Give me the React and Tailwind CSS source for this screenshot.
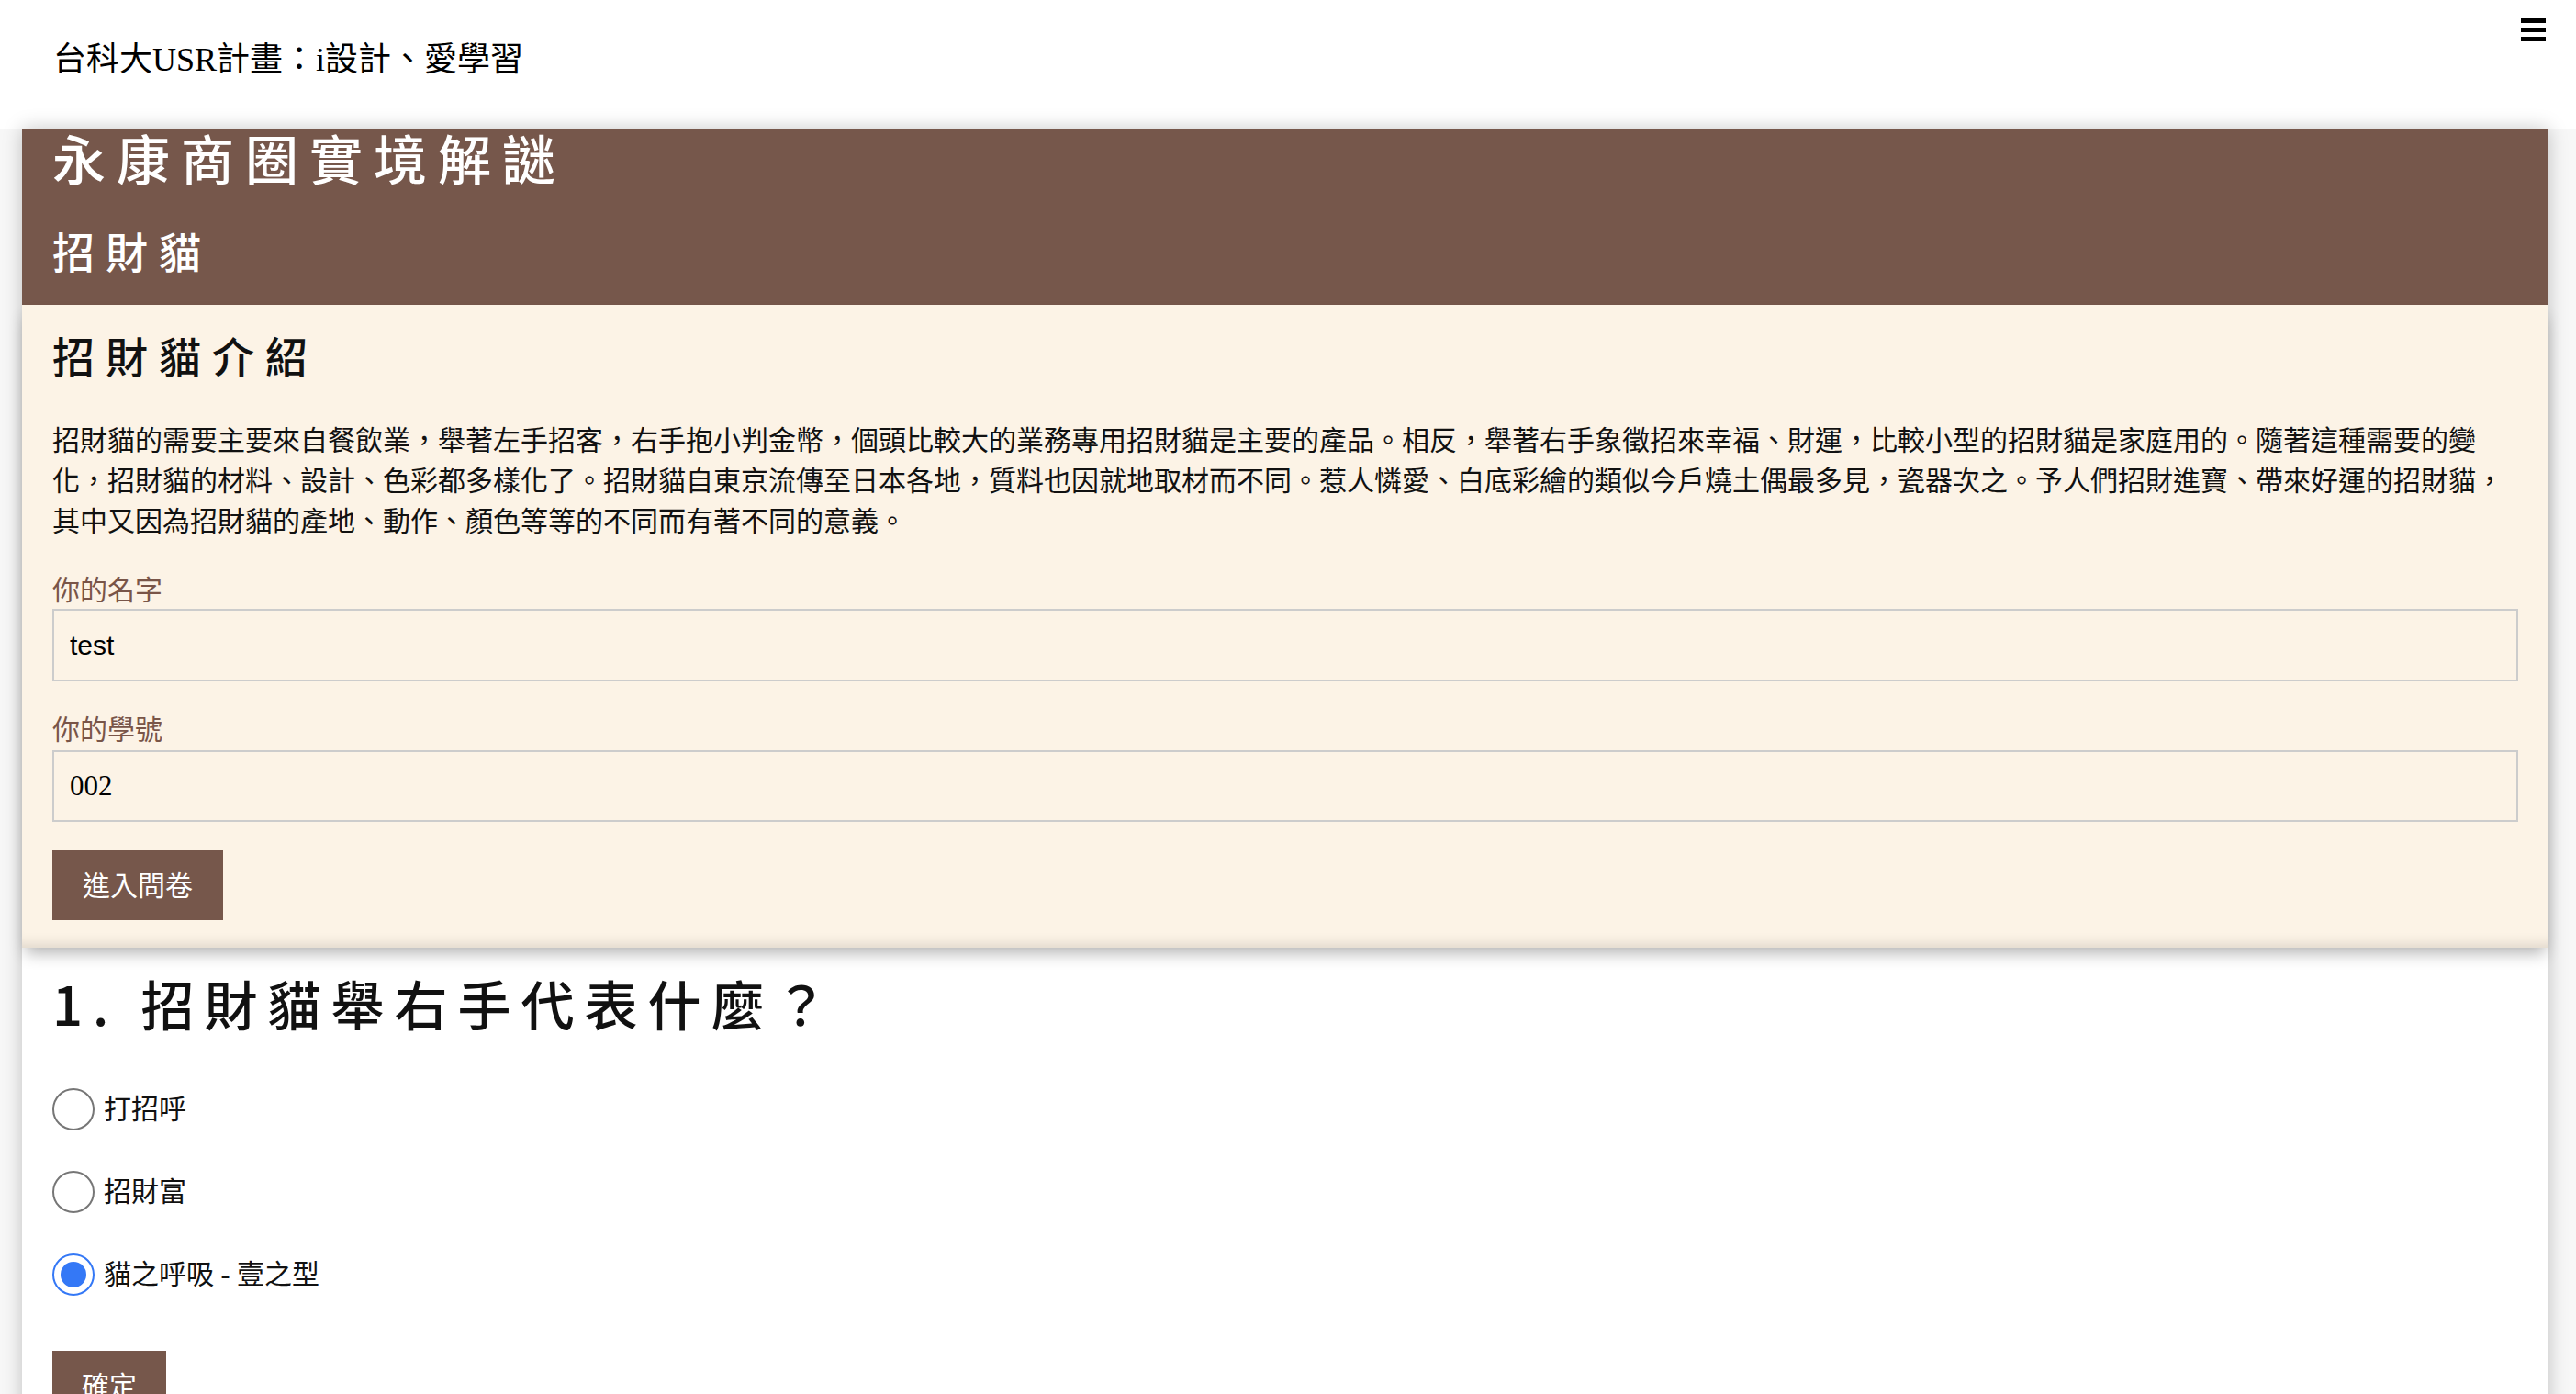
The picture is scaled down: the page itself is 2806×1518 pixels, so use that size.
const serif = "font-['Liberation_Serif','Noto_Sans_CJK_TC',serif]"
const sans = "font-['Noto_Sans_CJK_TC',sans-serif]"

const intro =
  '招財貓的需要主要來自餐飲業，舉著左手招客，右手抱小判金幣，個頭比較大的業務專用招財貓是主要的產品。相反，舉著右手象徵招來幸福、財運，比較小型的招財貓是家庭用的。隨著這種需要的變化，招財貓的材料、設計、色彩都多樣化了。招財貓自東京流傳至日本各地，質料也因就地取材而不同。惹人憐愛、白底彩繪的類似今戶燒土偶最多見，瓷器次之。予人們招財進寶、帶來好運的招財貓，其中又因為招財貓的產地、動作、顏色等等的不同而有著不同的意義。'

const options = [
  { label: '打招呼', checked: false },
  { label: '招財富', checked: false },
  { label: '貓之呼吸 - 壹之型', checked: true },
]

function Radio({ checked }) {
  return checked ? (
    <span className="w-[46px] h-[46px] rounded-full border-2 border-[#3478f6] bg-white flex items-center justify-center flex-shrink-0">
      <span className="w-[28px] h-[28px] rounded-full bg-[#3478f6]" />
    </span>
  ) : (
    <span className="w-[46px] h-[46px] rounded-full border-2 border-[#767676] bg-white flex-shrink-0" />
  )
}

export default function App() {
  return (
    <div className="min-h-screen bg-[#f7f7f7]">
      <header className="h-[140px] bg-white flex justify-between">
        <div className={`mt-[43px] ml-[58px] text-[36px] leading-[44px] text-black ${serif}`}>
          台科大USR計畫：i設計、愛學習
        </div>
        <button className="mt-[20px] mr-[33px] w-[27px] h-[25px] flex flex-col gap-[5px]" aria-label="menu">
          <span className="block h-[5px] w-full bg-black" />
          <span className="block h-[5px] w-full bg-black" />
          <span className="block h-[5px] w-full bg-black" />
        </button>
      </header>

      <main className="pl-[24px] pr-[30px]">
        <div className="shadow-[0_0_20px_rgba(0,0,0,0.22)]">
          <section className={`bg-[#76574b] px-[33px] pb-[32px] text-white ${sans}`}>
            <h1 className="text-[58px] leading-[62px] tracking-[12px] font-medium">永康商圈實境解謎</h1>
            <h2 className="mt-[42px] text-[46px] leading-[56px] tracking-[12px] font-medium">招財貓</h2>
          </section>

          <section className="relative z-10 bg-[#fcf3e6] px-[33px] pt-[26px] pb-[30px] shadow-[0_10px_16px_-4px_rgba(0,0,0,0.3),inset_0_-16px_14px_-12px_rgba(0,0,0,0.12)]">
            <h3 className={`text-[46px] leading-[56px] tracking-[12px] font-medium text-[#111] ${sans}`}>招財貓介紹</h3>
            <p className={`mt-[44px] text-[30px] leading-[44px] text-[#111] ${serif}`}>{intro}</p>

            <label className={`block mt-[35px] mb-[2px] text-[30px] leading-[36px] text-[#795548] ${serif}`}>你的名字</label>
            <input
              defaultValue="test"
              className="block w-full h-[79px] border-2 border-[#cccccc] bg-transparent pl-[17px] text-[30px] text-black outline-none font-['Liberation_Sans',sans-serif]"
            />

            <label className={`block mt-[35px] mb-[4px] text-[30px] leading-[36px] text-[#795548] ${serif}`}>你的學號</label>
            <input
              defaultValue="002"
              className="block w-full h-[78px] border-2 border-[#cccccc] bg-transparent pl-[17px] text-[31px] text-black outline-none font-['Liberation_Serif',serif]"
            />

            <button className={`mt-[31px] h-[76px] px-[33px] bg-[#76574b] text-white text-[30px] ${serif}`}>進入問卷</button>
          </section>

          <section className="bg-white px-[33px] pt-[25px] pb-[40px]">
            <h3 className={`text-[58px] leading-[70px] tracking-[11px] font-medium text-[#111] ${sans}`}>1. 招財貓舉右手代表什麼？</h3>
            <div className="mt-[57px] flex flex-col gap-[42px]">
              {options.map((o) => (
                <label key={o.label} className="flex items-center h-[48px]">
                  <Radio checked={o.checked} />
                  <span className={`ml-[10px] text-[30px] leading-[40px] text-[#111] ${serif}`}>{o.label}</span>
                </label>
              ))}
            </div>
            <button className={`mt-[59px] h-[76px] px-[32px] bg-[#76574b] text-white text-[30px] ${serif}`}>確定</button>
          </section>
        </div>
      </main>
    </div>
  )
}
